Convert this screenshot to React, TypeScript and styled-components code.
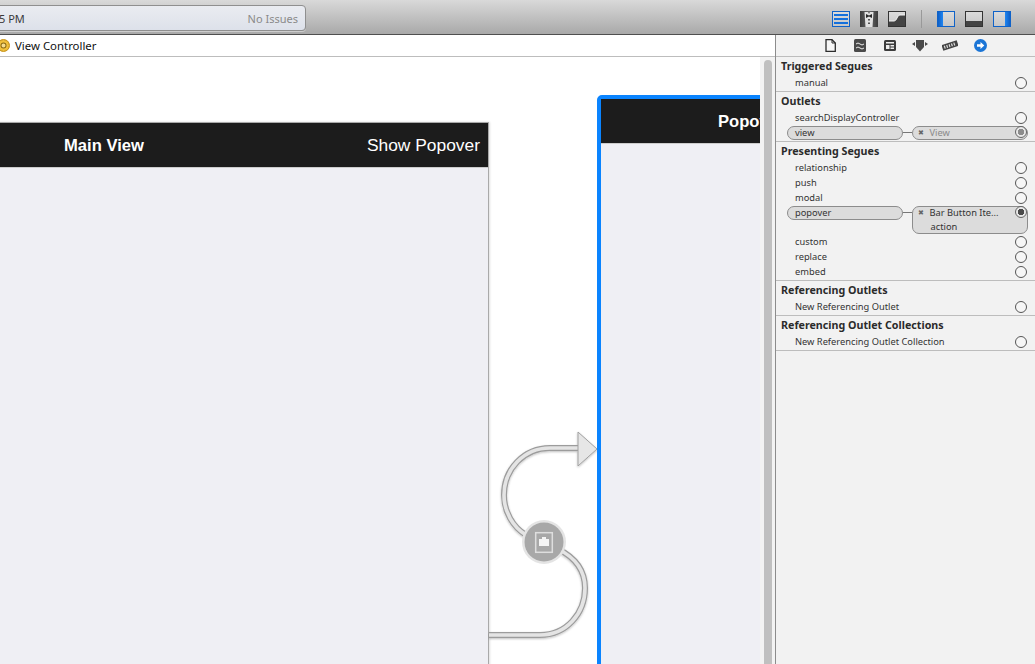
import styled, { createGlobalStyle } from 'styled-components';

const GlobalStyle = createGlobalStyle`
  html, body {
    margin: 0;
    padding: 0;
    width: 1035px;
    height: 664px;
    overflow: hidden;
    background: #fff;
    font-family: "Noto Sans", "Liberation Sans", sans-serif;
  }
`;

type Connection = { label: string, target: string, action?: string, dim?: boolean };
type Section = {
  title: string,
  rows: { name: string, connection?: Connection }[],
};

const sections: Section[] = [
  { title: 'Triggered Segues', rows: [{ name: 'manual' }] },
  {
    title: 'Outlets',
    rows: [
      { name: 'searchDisplayController' },
      { name: 'view', connection: { label: 'view', target: 'View', dim: true } },
    ],
  },
  {
    title: 'Presenting Segues',
    rows: [
      { name: 'relationship' },
      { name: 'push' },
      { name: 'modal' },
      {
        name: 'popover',
        connection: { label: 'popover', target: 'Bar Button Ite...', action: 'action' },
      },
      { name: 'custom' },
      { name: 'replace' },
      { name: 'embed' },
    ],
  },
  { title: 'Referencing Outlets', rows: [{ name: 'New Referencing Outlet' }] },
  { title: 'Referencing Outlet Collections', rows: [{ name: 'New Referencing Outlet Collection' }] },
];

function ToolbarIcons() {
  return (
    <ToolIcons>
      <svg width="18" height="16" viewBox="0 0 18 16">
        <defs>
          <linearGradient id="panel-bg" x1="0" y1="0" x2="0" y2="1">
            <stop offset="0" stopColor="#dcdcdc" />
            <stop offset="1" stopColor="#c6c6c6" />
          </linearGradient>
          <linearGradient id="blue-left" x1="0" y1="0" x2="1" y2="0">
            <stop offset="0" stopColor="#0f5fc6" />
            <stop offset="1" stopColor="#1f86f2" />
          </linearGradient>
          <linearGradient id="blue-right" x1="0" y1="0" x2="1" y2="0">
            <stop offset="0" stopColor="#1f86f2" />
            <stop offset="1" stopColor="#0f5fc6" />
          </linearGradient>
          <linearGradient id="tux-bg" x1="0" y1="0" x2="1" y2="0">
            <stop offset="0" stopColor="#3c3c3c" />
            <stop offset="0.5" stopColor="#6a6a6a" />
            <stop offset="1" stopColor="#3c3c3c" />
          </linearGradient>
        </defs>
        <rect x="0.5" y="0.5" width="17" height="15" fill="url(#panel-bg)" stroke="#0f62c8" />
        <rect x="2" y="3" width="14" height="2" fill="#1470dc" />
        <rect x="2" y="7" width="14" height="2" fill="#1470dc" />
        <rect x="2" y="11" width="14" height="2" fill="#1470dc" />
      </svg>
      <svg width="18" height="16" viewBox="0 0 18 16">
        <rect width="18" height="16" fill="url(#tux-bg)" />
        <path d="M4.5 1 L8 1 L9 3 L10 1 L13.5 1 L12.5 16 L5.5 16 Z" fill="#e2e2e2" />
        <path d="M6 3 L9 4.5 L12 3 L12 7 L9 5.5 L6 7 Z" fill="#2a2a2a" />
        <rect x="8" y="8" width="2" height="1.5" fill="#555" />
        <rect x="8" y="11.5" width="2" height="1.5" fill="#555" />
      </svg>
      <svg width="18" height="16" viewBox="0 0 18 16">
        <rect x="0.5" y="0.5" width="17" height="15" fill="url(#panel-bg)" stroke="#333" />
        <path d="M1 10 H6 C9 10 9 4 12 4 H17 V15 H1 Z" fill="#444" />
        <path d="M1 10 H6 C9 10 9 4 12 4 H17" fill="none" stroke="#f4f4f4" />
      </svg>
      <ToolSeparator />
      <svg width="18" height="16" viewBox="0 0 18 16">
        <rect x="0.5" y="0.5" width="17" height="15" fill="url(#panel-bg)" stroke="#0f62c8" />
        <rect x="1" y="1" width="5" height="14" fill="url(#blue-left)" />
      </svg>
      <svg width="18" height="16" viewBox="0 0 18 16">
        <rect x="0.5" y="0.5" width="17" height="15" fill="url(#panel-bg)" stroke="#333" />
        <rect x="1" y="10" width="16" height="5" fill="#444" />
      </svg>
      <svg width="18" height="16" viewBox="0 0 18 16">
        <rect x="0.5" y="0.5" width="17" height="15" fill="url(#panel-bg)" stroke="#0f62c8" />
        <rect x="12" y="1" width="5" height="14" fill="url(#blue-right)" />
      </svg>
    </ToolIcons>
  );
}

function InspectorTabs() {
  return (
    <Tabs>
      <TabCell>
        <svg width="11" height="13" viewBox="0 0 11 13">
          <path d="M1 .7 H7 L10.3 4 V12.3 H1 Z" fill="#f6f6f6" stroke="#2c2c2c" strokeWidth="1.3" />
          <path d="M7 .7 V4 H10.3" fill="none" stroke="#2c2c2c" />
        </svg>
      </TabCell>
      <TabCell>
        <svg width="12" height="13" viewBox="0 0 12 13">
          <rect width="12" height="13" rx="1.5" fill="#4a4a4a" />
          <path d="M2 5 Q4 3 6 5 T10 5 M2 9 Q4 7 6 9 T10 9" fill="none" stroke="#eee" />
        </svg>
      </TabCell>
      <TabCell>
        <svg width="12" height="11" viewBox="0 0 12 11">
          <rect width="12" height="11" rx="1.5" fill="#3c3c3c" />
          <rect x="2" y="2" width="8" height="1.5" fill="#eee" />
          <rect x="2" y="5" width="3.5" height="4" fill="#eee" />
          <rect x="6.5" y="5" width="3.5" height="1.5" fill="#eee" />
          <rect x="6.5" y="7.5" width="3.5" height="1.5" fill="#eee" />
        </svg>
      </TabCell>
      <TabCell>
        <svg width="16" height="13" viewBox="0 0 16 13">
          <path d="M4 1 H12 V8 L8 12.5 L4 8 Z" fill="#4a4a4a" />
          <path d="M0 5 L3 3 V7 Z M16 5 L13 3 V7 Z" fill="#4a4a4a" />
        </svg>
      </TabCell>
      <TabCell>
        <svg width="16" height="13" viewBox="0 0 16 13">
          <g transform="rotate(-18 8 6.5)">
            <rect x="0" y="3.5" width="16" height="6" fill="#444" />
            <path d="M2.5 5 V8 M5 5 V8 M7.5 5 V8 M10 5 V8 M12.5 5 V8" stroke="#ddd" strokeWidth="1.2" />
          </g>
        </svg>
      </TabCell>
      <TabCell>
        <svg width="13" height="13" viewBox="0 0 13 13">
          <circle cx="6.5" cy="6.5" r="6.5" fill="#1b75d6" />
          <path d="M3 5.3 H6.5 V3 L10.3 6.5 L6.5 10 V7.7 H3 Z" fill="#fff" />
        </svg>
      </TabCell>
    </Tabs>
  );
}

function SegueCurve() {
  const line = 'M1 216 H52 C78 216 97 195 97 169 C97 150 86 138 70 130 L38 116 C25 108 16 93 16 76 C16 50 36 29 62 29 H92';
  return (
    <CurveSvg width="120" height="230" viewBox="0 0 120 230">
      <defs>
        <filter id="curve-shadow" x="-10%" y="-10%" width="120%" height="120%">
          <feDropShadow dx="0" dy="1" stdDeviation="1" floodColor="#000" floodOpacity="0.25" />
        </filter>
      </defs>
      <g filter="url(#curve-shadow)" fill="none">
        <path d={line} stroke="#9c9c9c" strokeWidth="6" />
        <path d={line} stroke="#e4e4e4" strokeWidth="3.6" />
        <path d="M90 13 L109 30 L90 47 Z" fill="#e6e6e6" stroke="#a0a0a0" strokeLinejoin="round" />
      </g>
      <circle cx="56" cy="123" r="22" fill="#e4e4e4" />
      <circle cx="56" cy="123" r="19.5" fill="#a8a8a8" />
      <rect x="47.7" y="113.7" width="16.6" height="19.6" fill="none" stroke="#dedede" strokeWidth="1.5" />
      <path d="M51 120 H54 V118 H58 V120 H61 V127 H51 Z" fill="#f4f4f4" />
    </CurveSvg>
  );
}

export default function App() {
  return (
    <>
      <GlobalStyle />
      <Window>
        <Toolbar>
          <Activity>
            <span>5 PM</span>
            <Issues>No Issues</Issues>
          </Activity>
          <ToolbarIcons />
        </Toolbar>
        <Body>
          <Editor>
            <JumpBar>
              <JumpIcon />
              View Controller
            </JumpBar>
            <CanvasArea>
              <Canvas>
                <Scene $left={-60} $top={65} $width={549}>
                  <NavBar>
                    <MainTitle>Main View</MainTitle>
                    <BarButton>Show Popover</BarButton>
                  </NavBar>
                </Scene>
                <SegueLayer><SegueCurve /></SegueLayer>
                <SelectedScene $left={597} $top={38} $width={400}>
                  <NavBar>
                    <PopoverTitle>Popover</PopoverTitle>
                  </NavBar>
                </SelectedScene>
              </Canvas>
              <ScrollTrack><ScrollThumb /></ScrollTrack>
            </CanvasArea>
          </Editor>
          <Inspector>
            <InspectorTabs />
            {sections.map((section) => (
              <SectionBox key={section.title}>
                <SectionTitle>{section.title}</SectionTitle>
                {section.rows.map((row) => (
                  row.connection ? (
                    <ConnectedRow key={row.name} $tall={!!row.connection.action}>
                      <SourcePill>{row.connection.label}</SourcePill>
                      <Wire />
                      <TargetPill $dim={row.connection.dim}>
                        <TargetLine>
                          <RemoveMark>✖</RemoveMark>
                          {row.connection.target}
                        </TargetLine>
                        {row.connection.action && <ActionLine>{row.connection.action}</ActionLine>}
                      </TargetPill>
                      <FilledDot $dim={row.connection.dim} />
                    </ConnectedRow>
                  ) : (
                    <Row key={row.name}>
                      {row.name}
                      <Dot />
                    </Row>
                  )
                ))}
              </SectionBox>
            ))}
          </Inspector>
        </Body>
      </Window>
    </>
  );
}

const Window = styled.div`
  width:1035px;
  height:664px;
  display:flex;
  flex-direction:column;
  overflow:hidden;
`;

const Toolbar = styled.div`
  height:35px;
  box-sizing:border-box;
  flex-shrink:0;
  display:flex;
  align-items:flex-start;
  justify-content:space-between;
  padding-top:5px;
  background:linear-gradient(#d9d9d9, #a9a9a9);
  border-bottom:1px solid #4f4f4f;
`;

const Activity = styled.div`
  width:314px;
  height:26px;
  box-sizing:border-box;
  margin-left:-8px;
  padding:0 7px 0 6px;
  display:flex;
  align-items:center;
  justify-content:space-between;
  font-size:11px;
  color:#3a3a3a;
  background:linear-gradient(#eaecf1, #dde1ea);
  border:1px solid #8f8f8f;
  border-radius:4px;
  box-shadow:0 1px 0 rgba(255,255,255,.4);
`;

const Issues = styled.span`
  color:#8a8a8a;
`;

const ToolIcons = styled.div`
  display:flex;
  align-items:center;
  gap:10px;
  margin:5px 24px 0 0;
`;

const ToolSeparator = styled.div`
  width:1px;
  height:18px;
  margin:0 5px;
  background:#999;
`;

const Body = styled.div`
  flex:1;
  display:flex;
  min-height:0;
`;

const Editor = styled.div`
  width:775px;
  display:flex;
  flex-direction:column;
`;

const JumpBar = styled.div`
  height:22px;
  box-sizing:border-box;
  flex-shrink:0;
  display:flex;
  align-items:center;
  gap:5px;
  font-size:11.4px;
  color:#111;
  background:#fff;
  border-bottom:1px solid #bdbdbd;
`;

const JumpIcon = styled.span`
  width:13px;
  height:13px;
  margin-left:-3px;
  box-sizing:border-box;
  background:#f0bf3a;
  border:1px solid #c9951d;
  border-radius:50%;
  box-shadow:inset 0 0 0 2.5px #f0bf3a, inset 0 0 0 3.5px #8a6a14, inset 0 0 0 6px #f6dc8c;
`;

const CanvasArea = styled.div`
  flex:1;
  display:flex;
  min-height:0;
`;

const Canvas = styled.div`
  position:relative;
  flex:1;
  overflow:hidden;
  background:#fff;
`;

const Scene = styled.div<{ $left: number, $top: number, $width: number }>`
  position:absolute;
  left:${(p) => p.$left}px;
  top:${(p) => p.$top}px;
  width:${(p) => p.$width}px;
  height:700px;
  box-sizing:border-box;
  background:#efeff4;
  border-top:1px solid #a9a9a9;
  border-right:1px solid #a9a9a9;
  box-shadow:1px 0 2px rgba(0,0,0,.12);
`;

const SelectedScene = styled(Scene)`
  border:4px solid #0a84ff;
  border-radius:5px 0 0 0;
  box-shadow:none;
`;

const NavBar = styled.div`
  position:relative;
  height:45px;
  background:#1c1c1c;
  color:#fff;
  border-bottom:1px solid #ccc;
  box-sizing:border-box;
  font-family:"Liberation Sans", Arial, sans-serif;
  font-size:17.4px;
`;

const MainTitle = styled.span`
  position:absolute;
  left:124px;
  top:13px;
  font-size:16.6px;
  font-weight:700;
`;

const BarButton = styled.span`
  position:absolute;
  right:8px;
  top:12px;
  white-space:nowrap;
`;

const PopoverTitle = styled.span`
  position:absolute;
  left:117px;
  top:13px;
  font-size:16.6px;
  font-weight:700;
`;

const SegueLayer = styled.div`
  position:absolute;
  left:488px;
  top:362px;
`;

const CurveSvg = styled.svg`
  display:block;
`;

const ScrollTrack = styled.div`
  width:15px;
  flex-shrink:0;
  padding:3px 3px 0 4px;
  box-sizing:border-box;
  background:#f3f3f3;
`;

const ScrollThumb = styled.div`
  height:100%;
  background:#c0c0c0;
  border-radius:4px 4px 0 0;
`;

const Inspector = styled.div`
  width:260px;
  box-sizing:border-box;
  display:flex;
  flex-direction:column;
  background:#f2f2f2;
  border-left:1px solid #8c8c8c;
`;

const Tabs = styled.div`
  height:22px;
  box-sizing:border-box;
  flex-shrink:0;
  display:flex;
  padding-left:39px;
  border-bottom:1px solid #bdbdbd;
`;

const TabCell = styled.div`
  width:30px;
  display:flex;
  align-items:center;
  justify-content:center;
`;

const SectionBox = styled.div`
  padding-bottom:1px;
  border-bottom:1px solid #bdbdbd;
`;

const SectionTitle = styled.div`
  height:18px;
  padding-left:5px;
  font-size:10.7px;
  line-height:19px;
  font-weight:700;
  color:#2b2b2b;
`;

const Row = styled.div`
  height:15px;
  display:flex;
  align-items:center;
  justify-content:space-between;
  padding:0 8px 0 19px;
  font-size:9.3px;
  color:#333;
`;

const Dot = styled.span`
  width:12px;
  height:12px;
  box-sizing:border-box;
  background:#f6f6f6;
  border:1px solid #555;
  border-radius:50%;
`;

const ConnectedRow = styled.div<{ $tall: boolean }>`
  position:relative;
  height:${(p) => (p.$tall ? 29 : 15)}px;
  box-sizing:border-box;
  display:flex;
  align-items:flex-start;
  padding:1px 7px 0 11px;
  font-size:9.3px;
  color:#333;
`;

const SourcePill = styled.div`
  width:116px;
  height:14px;
  box-sizing:border-box;
  padding-left:7px;
  line-height:12px;
  background:#dcdcdc;
  border:1px solid #8c8c8c;
  border-radius:7px;
`;

const Wire = styled.div`
  width:10px;
  height:1px;
  margin-top:6px;
  background:#777;
`;

const TargetPill = styled.div<{ $dim?: boolean }>`
  width:116px;
  box-sizing:border-box;
  padding-left:5px;
  line-height:12px;
  color:${(p) => (p.$dim ? '#8a8a8a' : '#333')};
  background:#dcdcdc;
  border:1px solid #8c8c8c;
  border-radius:7px;
`;

const TargetLine = styled.div`
  display:flex;
  gap:5px;
  white-space:nowrap;
`;

const RemoveMark = styled.span`
  font-size:7px;
  color:#666;
`;

const ActionLine = styled.div`
  padding:2px 0 0 12px;
`;

const FilledDot = styled.span<{ $dim?: boolean }>`
  position:absolute;
  right:8px;
  top:1px;
  width:12px;
  height:12px;
  box-sizing:border-box;
  background:radial-gradient(circle, ${(p) => (p.$dim ? '#8c8c8c' : '#4a4a4a')} 0 3px, #e8e8e8 3.5px);
  border:1px solid #666;
  border-radius:50%;
`;
